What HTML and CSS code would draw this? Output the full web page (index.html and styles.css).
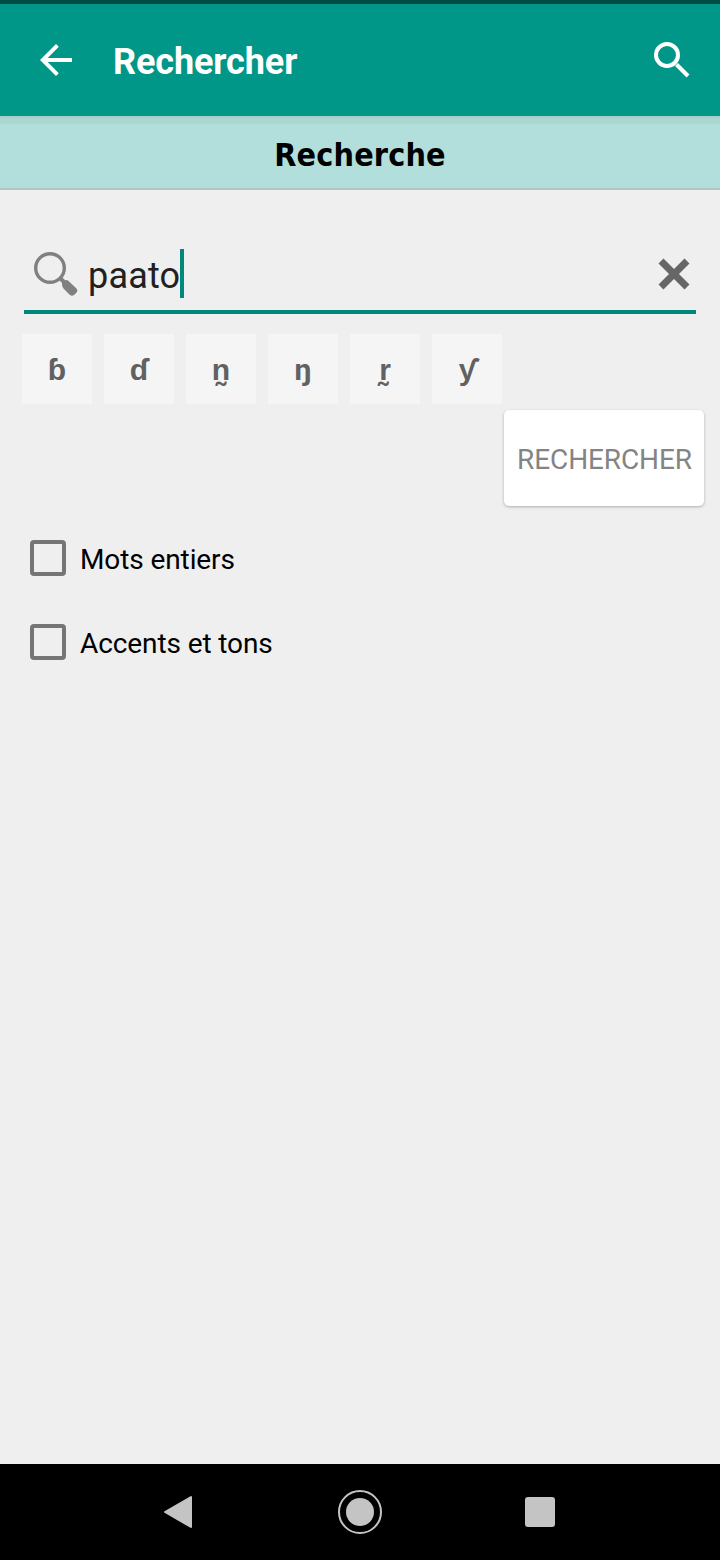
FILE: index.html
```html
<!DOCTYPE html>
<html lang="fr">
<head>
  <meta charset="UTF-8" />
  <meta name="viewport" content="width=device-width, initial-scale=1.0"/>
  <title>Rechercher</title>
  <link rel="stylesheet" href="styles.css">
</head>
<body>
  <header class="toolbar">
    <svg class="back-icon" viewBox="0 0 24 24"><path d="M20 11H7.83l5.59-5.59L12 4l-8 8 8 8 1.41-1.41L7.83 13H20v-2z"/></svg>
    <h1>Rechercher</h1>
    <svg class="search-icon" viewBox="0 0 36 36">
      <circle cx="13" cy="13" r="11"/>
      <path d="M22.5 22.5L34 34"/>
    </svg>
  </header>
  <div class="subtitle">Recherche</div>

  <main>
    <div class="search-box">
      <svg class="glass-icon" viewBox="0 0 46 46">
        <circle cx="17" cy="17" r="14.3"/>
        <path class="neck" d="M27 27l5 5"/>
        <path class="handle" d="M29 33.500Q28.500 32 30 31L32 29.500Q34 28.500 35.500 30L43.500 37.500Q45 39 44 41L41 44Q39 45.500 37 44L30.500 37.500Q29.500 36.500 29 33.500z"/>
      </svg>
      <span class="query">paato</span><span class="caret"></span>
      <svg class="clear-icon" viewBox="0 0 32 32"><path d="M3 3l26 26M29 3L3 29"/></svg>
    </div>

    <div class="keys">
      <button>ɓ</button>
      <button>ɗ</button>
      <button>n̰</button>
      <button>ŋ</button>
      <button>r̰</button>
      <button>ƴ</button>
    </div>

    <button class="submit">RECHERCHER</button>

    <label class="option"><input type="checkbox" /><span>Mots entiers</span></label>
    <label class="option"><input type="checkbox" /><span>Accents et tons</span></label>
  </main>

  <nav class="navbar">
    <svg viewBox="0 0 44 44"><path class="back" d="M7 22L33 7v30z"/></svg>
    <svg viewBox="0 0 44 44"><circle class="ring" cx="22" cy="22" r="21"/><circle cx="22" cy="22" r="14"/></svg>
    <svg viewBox="0 0 44 44"><rect x="7" y="7" width="30" height="30" rx="3"/></svg>
  </nav>
</body>
</html>
```

FILE: styles.css
```css
* {
  box-sizing: border-box;
}
body {
  font-family: Roboto, sans-serif;
  background: #efefef;
  margin: 0;
  height: 1560px;
  display: flex;
  flex-direction: column;
}
.toolbar {
  height: 116px;
  border-top: 4px solid #004d43;
  background: #009788;
  display: flex;
  align-items: center;
  padding: 0 30px 0 32px;
}
.back-icon {
  width: 48px;
  height: 48px;
  fill: white;
}
h1 {
  margin: 3px 0 0 33px;
  font-size: 36px;
  font-weight: bold;
  line-height: 42px;
  letter-spacing: -0.1px;
  color: white;
  flex: 1;
}
.search-icon {
  width: 36px;
  height: 36px;
  fill: none;
  stroke: white;
  stroke-width: 4;
}
.subtitle {
  height: 74px;
  border-bottom: 2px solid #b3c4c1;
  background: linear-gradient(#a3cbcb 0, #a9d7d0 3px, #abd8d1 7px, #b2dfdb 9px);
  font-family: "DejaVu Sans Condensed", "DejaVu Sans", sans-serif;
  font-stretch: condensed;
  font-size: 32px;
  font-weight: bold;
  line-height: 78px;
  letter-spacing: 0.15px;
  text-align: center;
  color: black;
}
main {
  flex: 1;
  display: flex;
  flex-direction: column;
}
.search-box {
  height: 72px;
  margin: 52px 24px 0;
  padding: 0 6px 0 9px;
  border-bottom: 4px solid #00897b;
  display: flex;
  align-items: center;
}
.glass-icon {
  width: 46px;
  height: 46px;
  margin-top: -4px;
  fill: none;
  stroke: #808080;
  stroke-width: 3.4;
}
.glass-icon .neck {
  stroke-width: 4;
}
.glass-icon .handle {
  fill: #808080;
  stroke: none;
}
.query {
  margin-left: 9px;
  font-size: 36px;
  letter-spacing: 0.2px;
  color: #212121;
}
.caret {
  width: 4px;
  height: 49px;
  margin-top: -5px;
  background: #00897b;
}
.clear-icon {
  width: 32px;
  height: 32px;
  margin-top: -5px;
  margin-left: auto;
  fill: none;
  stroke: #666;
  stroke-width: 7;
}
.keys {
  display: flex;
  gap: 12px;
  padding: 20px 22px 0;
}
.keys button {
  width: 70px;
  height: 70px;
  padding: 0;
  border: none;
  background: #f5f5f5;
  font-family: Roboto, sans-serif;
  font-size: 30px;
  font-weight: bold;
  color: #616161;
}
.submit {
  align-self: flex-end;
  width: 200px;
  height: 96px;
  margin: 6px 16px 10px 0;
  padding: 3px 0 0 1px;
  border: none;
  border-radius: 5px;
  background: white;
  box-shadow: 0 1px 3px rgba(0,0,0,0.28);
  font-family: Roboto, sans-serif;
  font-size: 28px;
  letter-spacing: -0.1px;
  color: #848484;
}
.option {
  height: 84px;
  display: flex;
  align-items: center;
  padding-left: 30px;
  font-size: 28px;
  line-height: 34px;
  letter-spacing: -0.1px;
  color: black;
}
.option span {
  margin-top: 4px;
}
.option input {
  appearance: none;
  width: 36px;
  height: 36px;
  margin: 0 14px 0 0;
  border: 4px solid #757575;
  border-radius: 4px;
}
.navbar {
  height: 96px;
  background: black;
  display: flex;
  justify-content: center;
  align-items: center;
  gap: 136px;
}
.navbar svg {
  width: 44px;
  height: 44px;
  fill: #c4c4c4;
}
.navbar .back {
  stroke: #c4c4c4;
  stroke-width: 2;
  stroke-linejoin: round;
}
.navbar .ring {
  fill: none;
  stroke: #c4c4c4;
  stroke-width: 2;
}
```
